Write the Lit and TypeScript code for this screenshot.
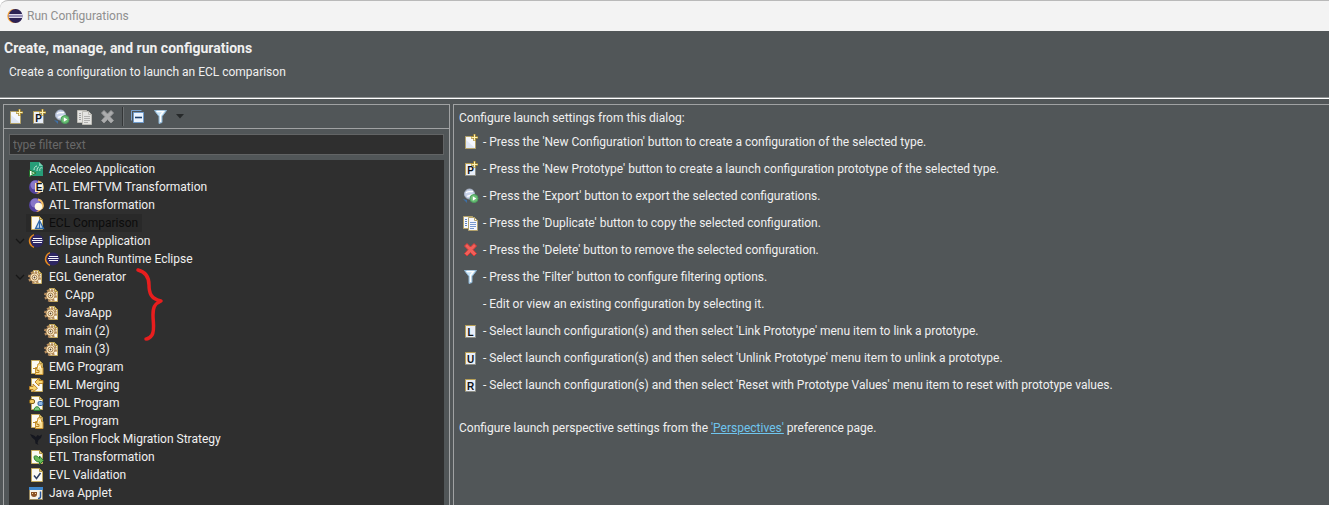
import { LitElement, html, css, svg, nothing, TemplateResult } from "lit";
import { customElement, property, state } from "lit/decorators.js";
import { classMap } from "lit/directives/class-map.js";

const page = svg`<path d="M2.500 1.500h8l3 3v10h-11z" fill="#fbfaf3" stroke="#c4aa5e"/><path d="M10.500 1.500v3h3z" fill="#e6cf8a" stroke="#b39746"/>`;

const sheet = svg`<path d="M2.500 2.500h10v12h-10z" fill="#e9eef8" stroke="#8e8f86"/><path d="M2.500 14V2.500h10" fill="none" stroke="#b8a055"/>`;

const plus = svg`<path d="M11.500 0v7M8 3.500h7" stroke="#a8892f" stroke-width="2.400"/><path d="M11.500 .5v6M8.500 3.500h6" stroke="#fff3b4" stroke-width="1"/>`;

const letter = (c: string) =>
  svg`<text x="7.500" y="13" text-anchor="middle" font-family="Liberation Sans, Arial, sans-serif" font-size="10" font-weight="bold" fill="#101418">${c}</text>`;

const gearAt = svg`
  <circle cx="5.500" cy="8.500" r="5.300" fill="none" stroke="#b98f60" stroke-width="2.400" stroke-dasharray="2.200 1.963"/>
  <circle cx="5.500" cy="8.500" r="4.500" fill="#f8e2b8" stroke="#a37b4a" stroke-width=".9"/>
  <circle cx="5.500" cy="8.500" r="2.400" fill="#fff6e0" stroke="#96703f" stroke-width=".9"/>
  <circle cx="5.500" cy="8.500" r=".9" fill="#5a3f20"/>`;

const puzzle = svg`<path d="M8.500 8.500V6.500q0-2 2-2t2 2v2h1.500v7H6.500v-7z" fill="#fbdf94" stroke="#c8922f"/><path d="M9.500 9.500v-2h2v2" fill="none" stroke="#fff8e0"/><path d="M4 9.500h4v2h2v2H7" fill="none" stroke="#b98627"/>`;

const sun = svg`<circle cx="7" cy="8" r="7" fill="#5544a0"/><circle cx="6" cy="6" r="4.500" fill="#9484d2" opacity=".8"/><path d="M13.800 5.500A7 7 0 0 1 7 15q5-3 3-7z" fill="#e9a849"/><path d="M9 2.500a6 6 0 0 1 4 9" fill="none" stroke="#f3be65" stroke-width="2"/>`;

const magnifierDisk = (tone: string) => svg`
  <circle cx="6.500" cy="6" r="5" fill="${tone}" stroke="#a9b3c6"/>
  <path d="M3 5c2-3 5 0 7-2M4 8c2 1 3-2 6-1" stroke="#fff" stroke-width="1.300" fill="none"/>
  <path d="M0 11l4 1v3z" fill="#3e6fa5"/>
  <circle cx="11" cy="10.500" r="4" fill="#6cbf76" stroke="#4ba25e"/><path d="M9.800 8.300v4.400l3.500-2.200z" fill="#fff"/>`;

const copies = (ink: string, edge: string, paper: string) => svg`
  <path d="M.5 1.500h9v12h-9z" fill="${paper}" stroke="${edge}"/><path d="M2 4.500h2M2 6.500h2M2 8.500h2M2 10.500h2" stroke="${ink}"/>
  <path d="M5.500 2.500h6l3 3v10h-9z" fill="${paper}" stroke="${edge}"/><path d="M11.500 2.500v3h3" fill="none" stroke="${edge}"/>
  <path d="M7 7.500h6M7 9.500h6M7 11.500h6M7 13.500h4" stroke="${ink}" stroke-width=".8"/>`;

const cross = (fill: string, edge: string) =>
  svg`<path d="M1.500 4L4 1.500 7.500 5 11 1.500 13.500 4l-3.500 3.700 3.500 3.800L11 14l-3.500-3.500L4 14l-2.500-2.500L5 7.700z" fill="${fill}" stroke="${edge}"/>`;

const icons: Record<string, TemplateResult> = {
  logo: svg`<circle cx="7.300" cy="8" r="7" fill="#f2a13c"/><circle cx="8.600" cy="8" r="6.900" fill="#2c2255"/><path d="M2 6.500h13.500M2 9.500h13.500" stroke="#dcd7ea" stroke-width="1.200"/><path d="M1.500 8h14" stroke="#a49dc6" stroke-width="1.800"/>`,
  eclipse: svg`<path d="M5 1.800C-.8 5-.8 11 5 14.200" fill="none" stroke="#e58a1f" stroke-width="1.800"/><circle cx="8" cy="8" r="6.500" fill="#2d2663"/><path d="M4 5.500h9M3 7.500h10.500M4 9.500h9" stroke="#f4f3fa"/>`,
  fresh: svg`<path d="M2.500 2.500h10v12h-10z" fill="#f4f7fd" stroke="#b3a26a"/><path d="M3 14V6l9 8z" fill="#dfe7f5"/>${plus}`,
  proto: svg`${sheet}${letter("P")}${plus}`,
  link: svg`${sheet}${letter("L")}`,
  unlink: svg`${sheet}${letter("U")}`,
  reset: svg`${sheet}${letter("R")}`,
  export: svg`${magnifierDisk("#c5d0e8")}`,
  duplicate: svg`${copies("#5b82c0", "#b3a26a", "#f5f7fc")}`,
  duplicateOff: svg`${copies("#a2a2a2", "#bdbcb6", "#e4e4e2")}`,
  remove: svg`${cross("#f0605a", "#d63a36")}`,
  removeOff: svg`${cross("#abacad", "#98999a")}`,
  collapse: svg`<path d="M1.500 11.500v-10h10" fill="none" stroke="#7ba4d2"/><path d="M3.500 3.500h10v10h-10z" fill="#eaf4ff" stroke="#6f9ccd"/><path d="M5 8.500h7" stroke="#1d416f" stroke-width="1.600"/>`,
  filter: svg`<path d="M1.500 1.500h12L9 7.500v6l-3 1v-7z" fill="#c8e4f7" stroke="#8fb6d4"/><path d="M3.500 2.500h7L7.500 6v7" fill="none" stroke="#fff" stroke-width="1.300"/>`,
  acceleo: svg`<path d="M1 1h9l4 4v10H1z" fill="#279d78"/><path d="M10 1v4h4z" fill="#7bd0b4"/><path d="M8 10c0-3 1-4 2-4M11 10c-1-2 .5-4 2.500-3M5 9c0-2 1-4 3-4" stroke="#bfe8d8" stroke-width="1" fill="none"/><path d="M.5 9v6.500L7 12z" fill="#fff" stroke="#23742a"/><path d="M2.500 11v2.500L5 12z" fill="#35a13c"/>`,
  emftvm: svg`${sun}<path d="M6 4h8v9H6z" fill="#f8eccb"/><path d="M7 5h6v7H7z" fill="#fff"/><text x="10.200" y="12" text-anchor="middle" font-family="Liberation Sans, Arial, sans-serif" font-size="10" font-weight="bold" fill="#111">E</text>`,
  atl: svg`${sun}<circle cx="9.500" cy="9.500" r="3.800" fill="#fffbe6"/>`,
  ecl: svg`${page}<path d="M10.500 5.500l4 8h-8z" fill="#b8d3ee" stroke="#2d68a8" stroke-width="1.300"/><path d="M10.500 7v6M7 13.500h7.500" stroke="#2d68a8"/>`,
  egl: svg`<path d="M4.500 1.500h5l3 3v10h-8z" fill="#fbf7e8" stroke="#c4aa5e"/><path d="M9.500 1.500v3h3z" fill="#e6cf8a" stroke="#b39746"/>${gearAt}`,
  emg: svg`${page}${puzzle}`,
  eml: svg`${page}<path d="M14 3.500h-4V1L6 5l4 4V6.500h4zM.5 9.500H4V7l4.500 4.300L4 15v-2.500H.5z" fill="#f9d66f" stroke="#b57c20" stroke-width=".9"/>`,
  eol: svg`${page}<rect x=".5" y="4.500" width="5" height="4" rx="1.500" fill="#f5cd62" stroke="#80601a"/><rect x="9" y="6.500" width="5" height="4" rx="1.500" fill="#8eb6e2" stroke="#2e5d97"/><path d="M5 15.500c0-5 6-5 6 0z" fill="#7ec67e" stroke="#2c8534"/>`,
  epl: svg`${page}${puzzle}`,
  flock: svg`<path d="M1 3l4 1.500 2 1.500 1.500-2 2 1 2.500-1.500-1 3.500-2.500 2-1 3 1 2-3-1.500L6 9 3 6.500z" fill="#15171f"/>`,
  etl: svg`${page}<path d="M5 7.500c2-1.500 4 0 5.500 2V7l4 4.500-4 4V13C8 13 5 11.500 5 7.500z" fill="#68b858" stroke="#287a2a"/>`,
  evl: svg`${page}<path d="M5 8.500l2.500 3L11.500 6" stroke="#2d3e60" stroke-width="1.500" fill="none"/>`,
  applet: svg`<path d="M.5 2.500h13v12H.5z" fill="#f6f3ea" stroke="#9a8a60"/><path d="M0 2h14v3H0z" fill="#3f87cd"/><path d="M2 7h6v2c0 2-1 3-3 3S2 11 2 9z" fill="#8a5227"/><path d="M3 8.500h1M6 8.500h1" stroke="#f6d9a2"/><path d="M11.500 6.500v5c0 2-1 2-2.500 2" stroke="#27569b" stroke-width="1.500" fill="none"/>`,
};

const icon = (name: string) =>
  html`<svg class="icon" viewBox="0 0 16 16" width="16" height="16" aria-hidden="true">${icons[name]}</svg>`;

const shared = css`
  * { box-sizing: border-box; }
  .icon { display: block; flex: none; overflow: visible; }
  button { padding: 0; border: 0; background: none; color: inherit; font: inherit; }
`;

interface Entry {
  icon: string;
  label: string;
  children?: Entry[];
}

const ENTRIES: Entry[] = [
  { icon: "acceleo", label: "Acceleo Application" },
  { icon: "emftvm", label: "ATL EMFTVM Transformation" },
  { icon: "atl", label: "ATL Transformation" },
  { icon: "ecl", label: "ECL Comparison" },
  { icon: "eclipse", label: "Eclipse Application", children: [{ icon: "eclipse", label: "Launch Runtime Eclipse" }] },
  {
    icon: "egl",
    label: "EGL Generator",
    children: ["CApp", "JavaApp", "main (2)", "main (3)"].map((label) => ({ icon: "egl", label })),
  },
  { icon: "emg", label: "EMG Program" },
  { icon: "eml", label: "EML Merging" },
  { icon: "eol", label: "EOL Program" },
  { icon: "epl", label: "EPL Program" },
  { icon: "flock", label: "Epsilon Flock Migration Strategy" },
  { icon: "etl", label: "ETL Transformation" },
  { icon: "evl", label: "EVL Validation" },
  { icon: "applet", label: "Java Applet" },
];

@customElement("config-tree")
export class ConfigTree extends LitElement {
  @property() filter = "";
  @state() private selected = "ECL Comparison";
  @state() private closed: string[] = [];

  static styles = [
    shared,
    css`
      :host { display: block; position: relative; background: #2f2f2f; color: #f0f0f0; }
      ul { list-style: none; margin: 0; padding: 0; }
      .group { padding-left: 16px; }
      .row { display: flex; align-items: center; height: 18px; padding-left: 4px; }
      .twist { width: 13px; height: 16px; flex: none; display: grid; place-items: center; }
      .item { display: flex; align-items: center; gap: 4px; height: 18px; padding: 0 4px 0 3px; white-space: nowrap; }
      .selected { background: #292929; color: #0c0c0c; }
      .brace { position: absolute; left: 125px; top: 106px; pointer-events: none; }
    `,
  ];

  private toggle(label: string) {
    this.closed = this.closed.includes(label) ? this.closed.filter((l) => l !== label) : [...this.closed, label];
  }

  private row(e: Entry): TemplateResult {
    const open = !!e.children && !this.closed.includes(e.label);
    return html`<li role="treeitem" aria-expanded=${e.children ? String(open) : nothing}>
      <div class="row">
        ${e.children
          ? html`<button class="twist" aria-label="Toggle ${e.label}" @click=${() => this.toggle(e.label)}>
              <svg width="10" height="6" viewBox="0 0 10 6"><path d="M1 1l4 4 4-4" fill="none" stroke="#171717" stroke-width="1.300" /></svg>
            </button>`
          : html`<span class="twist"></span>`}
        <button class=${classMap({ item: true, selected: this.selected === e.label })} @click=${() => (this.selected = e.label)}>
          ${icon(e.icon)}<span>${e.label}</span>
        </button>
      </div>
      ${open ? html`<ul class="group" role="group">${e.children!.map((c) => this.row(c))}</ul>` : nothing}
    </li>`;
  }

  render() {
    const f = this.filter.toLowerCase();
    const match = (e: Entry): boolean => e.label.toLowerCase().includes(f) || !!e.children?.some(match);
    return html`
      <ul role="tree" aria-label="Launch configurations">${ENTRIES.filter(match).map((e) => this.row(e))}</ul>
      <svg class="brace" width="32" height="78" viewBox="0 0 32 78" aria-hidden="true">
        <path d="M4 4C12 6 15 12 15 19C15 27 17 33 27 35C20 38 19 42 19 49C19 57 21 64 18 69C16 72 14 73 12 73" fill="none" stroke="#e81e1e" stroke-width="3.500" stroke-linecap="round" stroke-linejoin="round" />
      </svg>
    `;
  }
}

const TOOLS: [string, string][] = [
  ["fresh", "New Configuration"],
  ["proto", "New Prototype"],
  ["export", "Export"],
  ["duplicateOff", "Duplicate"],
  ["removeOff", "Delete"],
];

const HINTS: [string, string][] = [
  ["fresh", "- Press the 'New Configuration' button to create a configuration of the selected type."],
  ["proto", "- Press the 'New Prototype' button to create a launch configuration prototype of the selected type."],
  ["export", "- Press the 'Export' button to export the selected configurations."],
  ["duplicate", "- Press the 'Duplicate' button to copy the selected configuration."],
  ["remove", "- Press the 'Delete' button to remove the selected configuration."],
  ["filter", "- Press the 'Filter' button to configure filtering options."],
  ["", "- Edit or view an existing configuration by selecting it."],
  ["link", "- Select launch configuration(s) and then select 'Link Prototype' menu item to link a prototype."],
  ["unlink", "- Select launch configuration(s) and then select 'Unlink Prototype' menu item to unlink a prototype."],
  ["reset", "- Select launch configuration(s) and then select 'Reset with Prototype Values' menu item to reset with prototype values."],
];

@customElement("app-root")
export class AppRoot extends LitElement {
  @state() private filter = "";

  static styles = [
    shared,
    css`
      :host {
        display: flex;
        flex-direction: column;
        height: 100vh;
        overflow: hidden;
        background: #515658;
        color: #f0f0f0;
        font: 12px/18px Roboto, "Open Sans", sans-serif;
      }
      .titlebar {
        display: flex;
        align-items: center;
        gap: 4px;
        height: 31px;
        flex: none;
        padding-left: 7px;
        border-top: 1px solid #b9b9b9;
        border-radius: 8px 0 0 0;
        background: #f3f3f3;
        color: #8f8f8f;
      }
      .corner { background: #fff; flex: none; }
      .head { flex: none; height: 68px; padding: 8px 4px 0; border-bottom: 1px solid #fff; box-shadow: inset 0 -1px #8f9293; }
      h1 { margin: 0; font-size: 14px; line-height: 18px; font-weight: 700; }
      .head p { margin: 6px 0 0 5px; }
      .main { flex: 1; min-height: 0; display: grid; grid-template-columns: minmax(0, 447px) minmax(0, 1fr); gap: 3px; padding: 5px 0 0 3px; }
      .side { display: flex; flex-direction: column; min-height: 0; border: solid #a0a2a3; border-width: 1px 1px 0; }
      .tools { display: flex; align-items: center; flex: none; height: 24px; padding-left: 4px; gap: 7px; border-bottom: 1px solid #a0a2a3; }
      .sep { width: 2px; height: 19px; margin: 0 -1px; background: #343738; border-right: 1px solid #6c7072; }
      .drop { display: flex; align-items: center; gap: 7px; }
      .search { flex: none; margin: 5px; height: 21px; padding: 0 3px; border: 1px solid #626465; border-radius: 0; background: #2f2f2f; color: #f0f0f0; font: inherit; outline: 0; }
      .search::placeholder { color: #686868; opacity: 1; }
      .tree { flex: 1; min-height: 0; margin: 0 5px; }
      .info { border: solid #a0a2a3; border-width: 1px 0 0 1px; padding: 4px 5px; min-width: 0; }
      .info p { margin: 0; }
      .hints { list-style: none; margin: 1px 0 21px; padding: 0 0 0 4px; }
      .hint { display: flex; align-items: center; gap: 4px; height: 27px; white-space: nowrap; }
      .blank { width: 16px; flex: none; }
      a { color: #6fc5ee; }
    `,
  ];

  render() {
    return html`
      <div class="corner"><header class="titlebar">${icon("logo")}<span>Run Configurations</span></header></div>
      <section class="head">
        <h1>Create, manage, and run configurations</h1>
        <p>Create a configuration to launch an ECL comparison</p>
      </section>
      <main class="main">
        <section class="side">
          <div class="tools" role="toolbar" aria-label="Configurations">
            ${TOOLS.map(([i, label]) => html`<button aria-label=${label}>${icon(i)}</button>`)}
            <span class="sep"></span>
            <button aria-label="Collapse All">${icon("collapse")}</button>
            <button class="drop" aria-label="Filter">
              ${icon("filter")}
              <svg width="8" height="5" viewBox="0 0 8 5"><path d="M0 0h8L4 4.500z" fill="#26292a" /></svg>
            </button>
          </div>
          <input
            class="search"
            type="text"
            placeholder="type filter text"
            aria-label="type filter text"
            @input=${(e: Event) => (this.filter = (e.target as HTMLInputElement).value)}
          />
          <config-tree class="tree" .filter=${this.filter}></config-tree>
        </section>
        <section class="info">
          <p>Configure launch settings from this dialog:</p>
          <ul class="hints">
            ${HINTS.map(([i, text]) => html`<li class="hint">${i ? icon(i) : html`<span class="blank"></span>`}<span>${text}</span></li>`)}
          </ul>
          <p>Configure launch perspective settings from the <a href="#perspectives">'Perspectives'</a> preference page.</p>
        </section>
      </main>
    `;
  }
}
